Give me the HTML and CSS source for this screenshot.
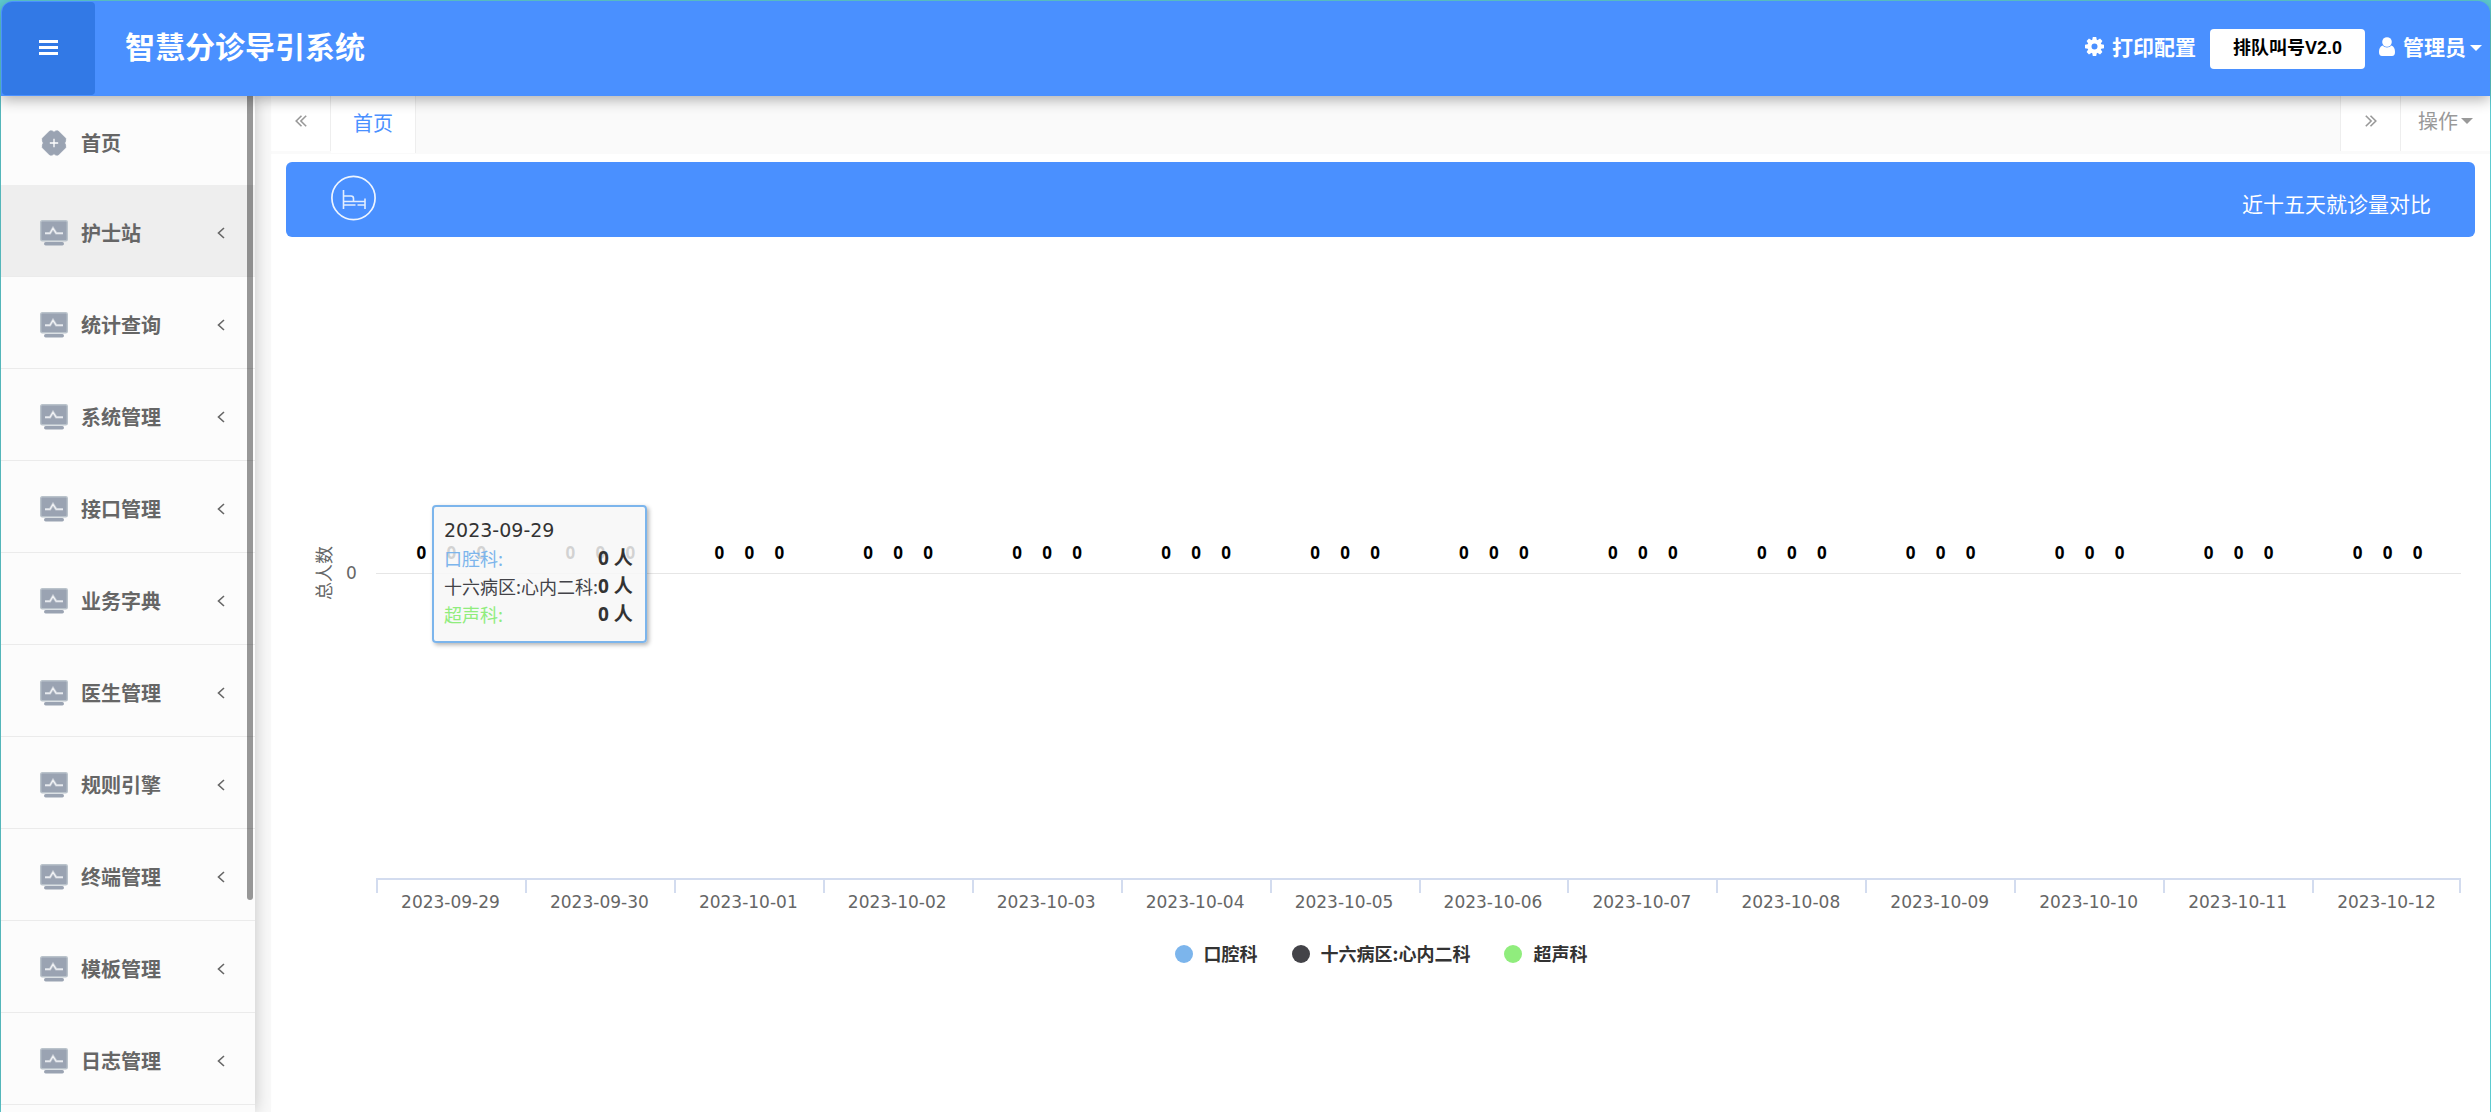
FILE: index.html
```html
<!DOCTYPE html>
<html lang="zh-CN">
<head>
<meta charset="utf-8">
<title>智慧分诊导引系统</title>
<link rel="stylesheet" href="styles.css">
</head>
<body>
<svg class="sprite" aria-hidden="true">
  <symbol id="i-monitor" viewBox="0 0 28 26">
    <rect x="0.7" y="0.7" width="26.6" height="20" rx="1.5" fill="#9aa3b2" stroke="#bac3cb" stroke-width="1.4"/>
    <path d="M5 13.3h5l3-5 3.2 5H23" fill="none" stroke="#c5cbd4" stroke-width="2.6"/>
    <path d="M5 13.3h5l3-5 3.2 5H23" fill="none" stroke="#f4f5f7" stroke-width="1.1"/>
    <rect x="4" y="22" width="20" height="3.4" rx="1.7" fill="#9aa3b2"/>
  </symbol>
  <symbol id="i-home" viewBox="0 0 28 28">
    <path d="M9.500 1h2.500l2 1.500 2-1.500h2.500l8 8v2.500l-1 2.500 1 2.500v2.500l-8 8h-2.500l-2-1.500-2 1.500h-2.500l-8-8v-2.500l1-2.500-1-2.500v-2.500z" fill="#9aa3b2" stroke="#9aa3b2" stroke-linejoin="round"/>
    <path d="M14 9.500v9M9.500 14h9" stroke="#fff" stroke-width="1.4"/>
  </symbol>
  <symbol id="i-left" viewBox="0 0 8 12"><path d="M7 1L1.500 6 7 11" fill="none" stroke="#666" stroke-width="1.6"/></symbol>
  <symbol id="i-dleft" viewBox="0 0 12 12"><path d="M6.500 .8L1.200 6l5.300 5.200M11.200 .8L5.900 6l5.300 5.200" fill="none" stroke="#999" stroke-width="1.600"/></symbol>
  <symbol id="i-dright" viewBox="0 0 12 12"><path d="M.8 .8L6.100 6 .8 11.200M5.500 .8L10.800 6l-5.300 5.200" fill="none" stroke="#999" stroke-width="1.600"/></symbol>
</svg>
<div class="app">
  <header class="topbar">
    <button class="toggle" type="button" aria-label="菜单">
      <svg width="19" height="15" viewBox="0 0 19 15"><path d="M0 1.500h19M0 7.500h19M0 13.500h19" stroke="#fff" stroke-width="3"/></svg>
    </button>
    <h1 class="brand">智慧分诊导引系统</h1>
    <div class="tools">
      <a class="tool" href="#">
        <svg width="19" height="19" viewBox="0 0 19 19"><g fill="#fff"><circle cx="9.500" cy="9.500" r="5" fill="none" stroke="#fff" stroke-width="4"/><path id="t" d="M7.800 0h3.400l.8 4h-5zM7.800 19h3.400l.8-4h-5z"/><use href="#t" transform="rotate(45 9.500 9.500)"/><use href="#t" transform="rotate(90 9.500 9.500)"/><use href="#t" transform="rotate(135 9.500 9.500)"/></g></svg>
        <span>打印配置</span>
      </a>
      <button class="version" type="button">排队叫号V2.0</button>
      <a class="tool user" href="#">
        <svg width="16" height="19" viewBox="0 0 16 19"><g fill="#fff"><circle cx="8" cy="5" r="4.800"/><path d="M3.500 8.500C1 9.500 0 12 0 15c0 2.500 1 4 3 4h10c2 0 3-1.500 3-4 0-3-1-5.500-3.500-6.500-2.500 2.500-6.500 2.500-9 0z"/></g></svg>
        <span>管理员</span><i class="caret"></i>
      </a>
    </div>
  </header>
  <div class="body">
    <nav class="sidebar">
      <ul class="menu">
        <li><a class="item first" href="#"><svg class="ico"><use href="#i-home"/></svg><span>首页</span></a></li>
        <li><a class="item active" href="#"><svg class="ico"><use href="#i-monitor"/></svg><span>护士站</span><svg class="arrow"><use href="#i-left"/></svg></a></li>
        <li><a class="item" href="#"><svg class="ico"><use href="#i-monitor"/></svg><span>统计查询</span><svg class="arrow"><use href="#i-left"/></svg></a></li>
        <li><a class="item" href="#"><svg class="ico"><use href="#i-monitor"/></svg><span>系统管理</span><svg class="arrow"><use href="#i-left"/></svg></a></li>
        <li><a class="item" href="#"><svg class="ico"><use href="#i-monitor"/></svg><span>接口管理</span><svg class="arrow"><use href="#i-left"/></svg></a></li>
        <li><a class="item" href="#"><svg class="ico"><use href="#i-monitor"/></svg><span>业务字典</span><svg class="arrow"><use href="#i-left"/></svg></a></li>
        <li><a class="item" href="#"><svg class="ico"><use href="#i-monitor"/></svg><span>医生管理</span><svg class="arrow"><use href="#i-left"/></svg></a></li>
        <li><a class="item" href="#"><svg class="ico"><use href="#i-monitor"/></svg><span>规则引擎</span><svg class="arrow"><use href="#i-left"/></svg></a></li>
        <li><a class="item" href="#"><svg class="ico"><use href="#i-monitor"/></svg><span>终端管理</span><svg class="arrow"><use href="#i-left"/></svg></a></li>
        <li><a class="item" href="#"><svg class="ico"><use href="#i-monitor"/></svg><span>模板管理</span><svg class="arrow"><use href="#i-left"/></svg></a></li>
        <li><a class="item" href="#"><svg class="ico"><use href="#i-monitor"/></svg><span>日志管理</span><svg class="arrow"><use href="#i-left"/></svg></a></li>
      </ul>
      <div class="thumb"></div>
    </nav>
    <main class="main">
      <div class="tabs">
        <button class="tabbtn prev" type="button" aria-label="向左"><svg width="12" height="12"><use href="#i-dleft"/></svg></button>
        <a class="tab" href="#">首页</a>
        <button class="tabbtn next" type="button" aria-label="向右"><svg width="12" height="12"><use href="#i-dright"/></svg></button>
        <button class="tabbtn ops" type="button">操作<i class="caret"></i></button>
      </div>
      <div class="content">
        <section class="banner">
          <svg width="46" height="46" viewBox="0 0 46 46" fill="none" stroke="#fff"><circle cx="22.500" cy="23" r="21.600" stroke-width="1.700" stroke="#eef5ff"/><path d="M12.500 15v19M12.500 26.500h21.500M12.500 30h12M26.500 30h7.500M34 23.500v10.500M12.500 21h7.500q2.500 0 2.500 2.500v3" stroke-width="1.600" stroke="#e3eeff"/></svg>
          <h2>近十五天就诊量对比</h2>
        </section>
        <section class="chart">
          <div class="yaxis"><span class="ytitle">总人数</span><span class="yvalue">0</span></div>
          <div class="plot">
            <ol class="cols">
              <li><p class="vals"><b>0</b><b>0</b><b>0</b></p><time>2023-09-29</time></li>
              <li><p class="vals"><b>0</b><b>0</b><b>0</b></p><time>2023-09-30</time></li>
              <li><p class="vals"><b>0</b><b>0</b><b>0</b></p><time>2023-10-01</time></li>
              <li><p class="vals"><b>0</b><b>0</b><b>0</b></p><time>2023-10-02</time></li>
              <li><p class="vals"><b>0</b><b>0</b><b>0</b></p><time>2023-10-03</time></li>
              <li><p class="vals"><b>0</b><b>0</b><b>0</b></p><time>2023-10-04</time></li>
              <li><p class="vals"><b>0</b><b>0</b><b>0</b></p><time>2023-10-05</time></li>
              <li><p class="vals"><b>0</b><b>0</b><b>0</b></p><time>2023-10-06</time></li>
              <li><p class="vals"><b>0</b><b>0</b><b>0</b></p><time>2023-10-07</time></li>
              <li><p class="vals"><b>0</b><b>0</b><b>0</b></p><time>2023-10-08</time></li>
              <li><p class="vals"><b>0</b><b>0</b><b>0</b></p><time>2023-10-09</time></li>
              <li><p class="vals"><b>0</b><b>0</b><b>0</b></p><time>2023-10-10</time></li>
              <li><p class="vals"><b>0</b><b>0</b><b>0</b></p><time>2023-10-11</time></li>
              <li><p class="vals"><b>0</b><b>0</b><b>0</b></p><time>2023-10-12</time></li>
            </ol>
            <div class="tooltip">
              <div class="tipdate">2023-09-29</div>
              <table>
                <tr class="s1"><th>口腔科:</th><td>0 人</td></tr>
                <tr class="s2"><th>十六病区:心内二科:</th><td>0 人</td></tr>
                <tr class="s3"><th>超声科:</th><td>0 人</td></tr>
              </table>
            </div>
          </div>
        </section>
        <ul class="legend">
          <li class="s1"><i></i>口腔科</li>
          <li class="s2"><i></i>十六病区:心内二科</li>
          <li class="s3"><i></i>超声科</li>
        </ul>
      </div>
    </main>
  </div>
</div>
</body>
</html>
```
FILE: styles.css
```css
* { box-sizing: border-box; }
body {
  margin: 0;
  background: #5ecbd0;
  font-family: "Noto Sans CJK SC", sans-serif;
  color: #333;
}
ul, ol, p, h1, h2 { margin: 0; padding: 0; list-style: none; }
a { color: inherit; text-decoration: none; }
button { font: inherit; border: 0; cursor: pointer; }
.sprite { display: none; }

.app {
  display: flex;
  flex-direction: column;
  height: 100vh;
  padding: 1px 1px 0;
  overflow: hidden;
}

/* header */
.topbar {
  position: relative;
  z-index: 3;
  display: flex;
  align-items: center;
  flex: none;
  height: 95px;
  padding: 1px 8px 1px 1px;
  background: #4a90ff;
  border-radius: 12px 12px 0 0;
  box-shadow: 0 4px 14px rgba(0, 0, 0, .3);
  color: #fff;
}
.toggle {
  display: flex;
  align-items: center;
  justify-content: center;
  width: 93px;
  height: 93px;
  padding: 0 0 2px;
  background: #3279e6;
  border-radius: 10px 4px 4px 4px;
}
.brand { margin-left: 30px; padding-bottom: 8px; font-size: 30px; line-height: 44px; font-weight: 700; }
.tools { display: flex; align-items: center; gap: 14px; margin-left: auto; }
.tool {
  display: flex;
  align-items: center;
  gap: 8px;
  padding-bottom: 4px;
  font-size: 21px;
  line-height: 30px;
  font-weight: 700;
}
.tool span { padding-bottom: 2px; }
.version {
  width: 155px;
  height: 40px;
  padding: 0 0 2px;
  background: #fff;
  border-radius: 4px;
  color: #000;
  font: 700 18px/24px "Liberation Sans", "Noto Sans CJK SC", sans-serif;
}
.caret {
  border: 6px solid transparent;
  border-top-color: currentColor;
  border-bottom: 0;
}
.user .caret { margin: 2px 0 0 -4px; }

/* sidebar */
.body { display: flex; flex: 1; min-height: 0; }
.sidebar {
  position: relative;
  z-index: 1;
  flex: none;
  width: 254px;
  background: #fcfcfc;
  box-shadow: 0 0 16px rgba(0, 0, 0, .22);
}
.item {
  display: flex;
  align-items: center;
  height: 92px;
  padding: 4px 30px 0 39px;
  border-bottom: 1px solid #ebebeb;
  font-size: 20px;
  line-height: 30px;
  font-weight: 700;
  color: #666;
}
.first { height: 89px; border: 0; }
.active { background: #eee; }
.ico { width: 28px; height: 26px; margin-right: 13px; }
.arrow { width: 8px; height: 12px; margin-left: auto; }
.thumb {
  position: absolute;
  top: 0;
  right: 2px;
  width: 6px;
  height: 804px;
  border-radius: 0 0 3px 3px;
  background: rgba(0, 0, 0, .4);
}

/* tabs */
.main { flex: 1; min-width: 0; padding-left: 16px; background: #f9f9f9; }
.tabs {
  display: flex;
  align-items: flex-start;
  height: 58px;
  background: #fafafa;
  color: #999;
  font-size: 20px;
}
.tabbtn {
  display: flex;
  align-items: center;
  justify-content: center;
  width: 60px;
  height: 55px;
  padding: 0 0 6px;
  background: #fff;
  color: #999;
  border-left: 1px solid #eee;
}
.prev { border-left: 0; border-right: 1px solid #eee; }
.next { margin-left: auto; }
.ops { width: 90px; gap: 3px; }
.tab {
  padding: 12px 22px 15px;
  background: #fff;
  border-right: 1px solid #eee;
  line-height: 30px;
  color: #4a90ff;
}

/* content */
.content { height: 100%; padding: 8px 15px 0; background: #fff; }
.banner {
  display: flex;
  align-items: flex-start;
  justify-content: space-between;
  height: 75px;
  padding: 13px 44px 0 45px;
  background: #4a90ff;
  border-radius: 6px;
  color: #fff;
}
.banner h2 { padding-top: 13px; font-size: 21px; line-height: 30px; font-weight: 400; }

.chart { display: flex; padding: 30px 14px 0 26px; color: #666; }
.yaxis {
  display: flex;
  align-items: center;
  gap: 12px;
  width: 64px;
  height: 612px;
  font-size: 18px;
}
.ytitle { writing-mode: vertical-rl; text-orientation: sideways; transform: rotate(180deg); line-height: 22px; }
.yvalue { font: 17px/20px "DejaVu Sans", sans-serif; }
.plot { position: relative; flex: 1; }
.cols { display: grid; grid-template-columns: repeat(14, 1fr); }
.vals {
  display: flex;
  justify-content: center;
  height: 307px;
  padding: 274px 0 0 2px;
  border-bottom: 1px solid #e6e6e6;
  color: #000;
}
.vals b { width: 30px; text-align: center; font: 700 17px/24px "Noto Sans", sans-serif; }
.cols time {
  display: block;
  margin-top: 304px;
  padding-top: 13px;
  border-top: 2px solid #d3dcef;
  background: linear-gradient(#d3dcef, #d3dcef) 0 0 / 2px 13px no-repeat;
  text-align: center;
  font: 17px/18px "DejaVu Sans", sans-serif;
}
.cols li:last-child time {
  background:
    linear-gradient(#d3dcef, #d3dcef) 0 0 / 2px 13px no-repeat,
    linear-gradient(#d3dcef, #d3dcef) 100% 0 / 2px 13px no-repeat;
}

.tooltip {
  position: absolute;
  left: 56px;
  top: 238px;
  height: 138px;
  padding: 9px 12px 0 10px;
  background: rgba(247, 247, 247, .85);
  border: 2px solid #7cb5ec;
  border-radius: 4px;
  box-shadow: 2px 2px 4px rgba(0, 0, 0, .3);
  font-size: 18px;
  line-height: 28px;
  color: #333;
}
.tipdate { font: 19px/28px "DejaVu Sans", sans-serif; }
.tooltip table { border-collapse: collapse; }
.tooltip th, .tooltip td { padding: 0; text-align: left; white-space: nowrap; }
.tooltip th { font-weight: 400; }
.tooltip td { font: 700 19px/28px "Noto Sans", "Noto Sans CJK SC", sans-serif; text-align: right; }
.s1 { --series: #7cb5ec; }
.s2 { --series: #434348; }
.s3 { --series: #90ed7d; }
.tooltip th { color: var(--series); }

.legend {
  display: flex;
  justify-content: center;
  gap: 34px;
  margin-top: 29px;
  padding-left: 1px;
  font-size: 18px;
  line-height: 27px;
  font-weight: 700;
}
.legend li { display: flex; align-items: center; gap: 11px; }
.legend i { width: 18px; height: 18px; border-radius: 50%; background: var(--series); }
```
